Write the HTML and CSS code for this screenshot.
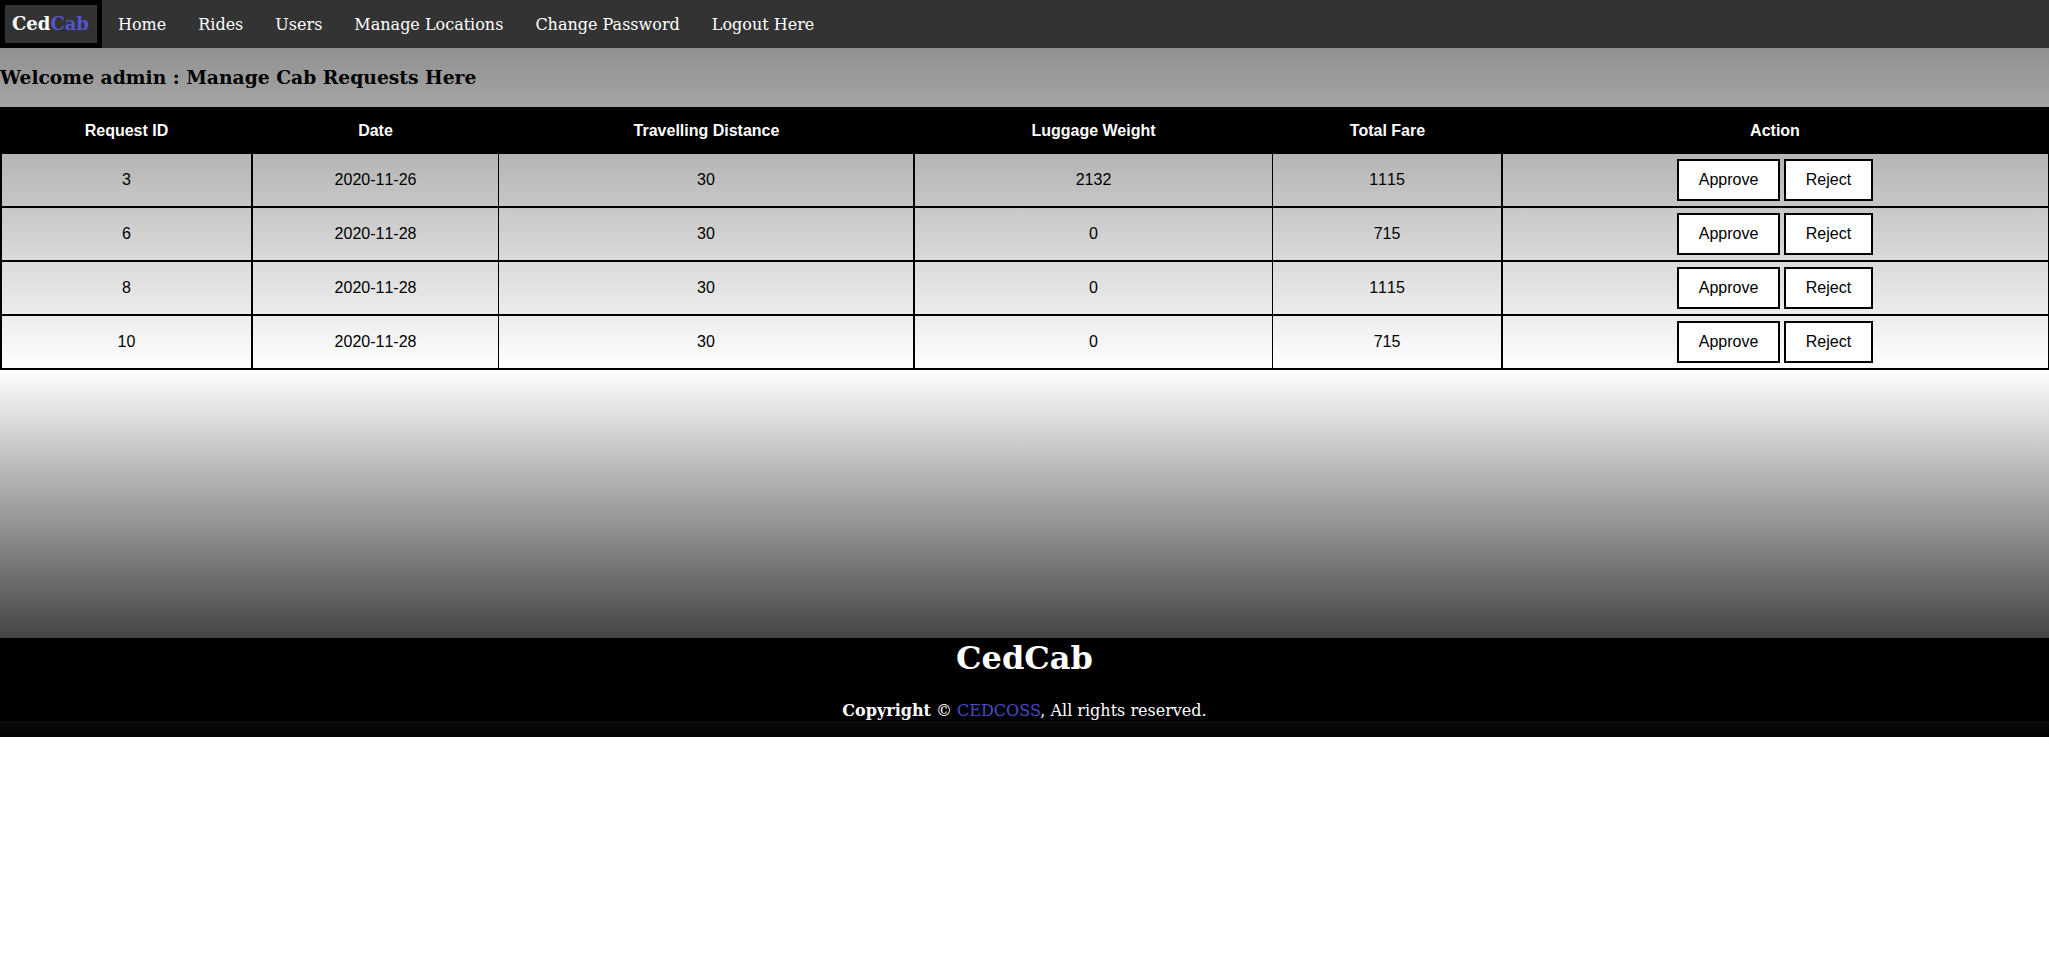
FILE: index.html
```html
<!DOCTYPE html>
<html lang="en">
<head>
    <meta charset="UTF-8">
    <meta name="viewport" content="width=device-width, initial-scale=1.0">
    <title>CedCab Admin</title>
    <link rel="stylesheet" href="styles.css">
</head>
<body>
    <nav>
        <a class="logo" href="#"><b>Ced</b><b class="blue">Cab</b></a>
        <a href="#">Home</a>
        <a href="#">Rides</a>
        <a href="#">Users</a>
        <a href="#">Manage Locations</a>
        <a href="#">Change Password</a>
        <a href="#">Logout Here</a>
    </nav>

    <h3>Welcome admin : Manage Cab Requests Here</h3>

    <table>
        <colgroup>
            <col class="col-id">
            <col class="col-date">
            <col class="col-distance">
            <col class="col-weight">
            <col class="col-fare">
            <col class="col-action">
        </colgroup>
        <thead>
            <tr>
                <th>Request ID</th>
                <th>Date</th>
                <th>Travelling Distance</th>
                <th>Luggage Weight</th>
                <th>Total Fare</th>
                <th>Action</th>
            </tr>
        </thead>
        <tbody>
            <tr>
                <td>3</td>
                <td>2020-11-26</td>
                <td>30</td>
                <td>2132</td>
                <td>1115</td>
                <td>
                    <button class="approve">Approve</button>
                    <button class="reject">Reject</button>
                </td>
            </tr>
            <tr>
                <td>6</td>
                <td>2020-11-28</td>
                <td>30</td>
                <td>0</td>
                <td>715</td>
                <td>
                    <button class="approve">Approve</button>
                    <button class="reject">Reject</button>
                </td>
            </tr>
            <tr>
                <td>8</td>
                <td>2020-11-28</td>
                <td>30</td>
                <td>0</td>
                <td>1115</td>
                <td>
                    <button class="approve">Approve</button>
                    <button class="reject">Reject</button>
                </td>
            </tr>
            <tr>
                <td>10</td>
                <td>2020-11-28</td>
                <td>30</td>
                <td>0</td>
                <td>715</td>
                <td>
                    <button class="approve">Approve</button>
                    <button class="reject">Reject</button>
                </td>
            </tr>
        </tbody>
    </table>

    <footer>
        <h2>CedCab</h2>
        <p><b>Copyright</b> &copy; <a href="#">CEDCOSS</a>, All rights reserved.</p>
    </footer>
</body>
</html>
```

FILE: styles.css
```css
html {
    background-color: #fff;
}
body {
    margin: 0;
    padding-bottom: 16px;
    font-family: "DejaVu Serif", serif;
    background: linear-gradient(gray, white, black);
}
nav {
    background-color: #333;
    display: flex;
    height: 48px;
    align-items: center;
}
nav a {
    color: #fff;
    text-decoration: none;
    padding: 0 16px;
    font-size: 16px;
}
nav .logo {
    background-color: #333;
    border: 5px solid #000;
    box-sizing: border-box;
    width: 102px;
    height: 48px;
    padding: 0 7px;
    line-height: 38px;
    font-size: 18px;
    white-space: nowrap;
}
.blue {
    color: #5555cc;
}
h3 {
    margin: 0;
    padding: 18px 0;
    font-size: 18.72px;
    line-height: 23px;
    color: #000;
}
table {
    width: 100%;
    table-layout: fixed;
    border-collapse: separate;
    border-spacing: 0;
    font-family: "Liberation Sans", Arial, sans-serif;
    font-size: 16px;
}
.col-id { width: 251px; }
.col-date { width: 247px; }
.col-distance { width: 415px; }
.col-weight { width: 359px; }
.col-fare { width: 229px; }
.col-action { width: 548px; }
th {
    background-color: #000;
    color: #fff;
    padding: 14px 0 14px 2px;
    line-height: 19px;
}
th:last-child {
    padding-left: 0;
}
td {
    border-bottom: 2px solid #000;
    border-left: 2px solid #000;
    padding: 5px 0;
    text-align: center;
    color: #000;
    font-kerning: none;
    word-spacing: -0.45px;
}
td:nth-child(3), td:nth-child(5) {
    border-left-width: 1px;
}
td:last-child {
    border-right: 1px solid #000;
    padding-right: 1px;
}
button {
    background-color: #fff;
    color: #000;
    border: 2px solid #000;
    padding: 10px 0;
    font-family: "Liberation Sans", Arial, sans-serif;
    font-size: 16px;
}
.approve {
    width: 103px;
}
.reject {
    width: 89px;
}
footer {
    margin-top: 268px;
    background-color: #000;
    color: #fff;
    text-align: center;
    height: 83px;
}
footer h2 {
    margin: 0;
    padding: 1px 0 24px;
    font-size: 32px;
    line-height: 38px;
}
footer p {
    margin: 0;
    font-size: 16px;
    line-height: 19px;
}
footer a {
    color: #4a4ac8;
    text-decoration: none;
}
```
